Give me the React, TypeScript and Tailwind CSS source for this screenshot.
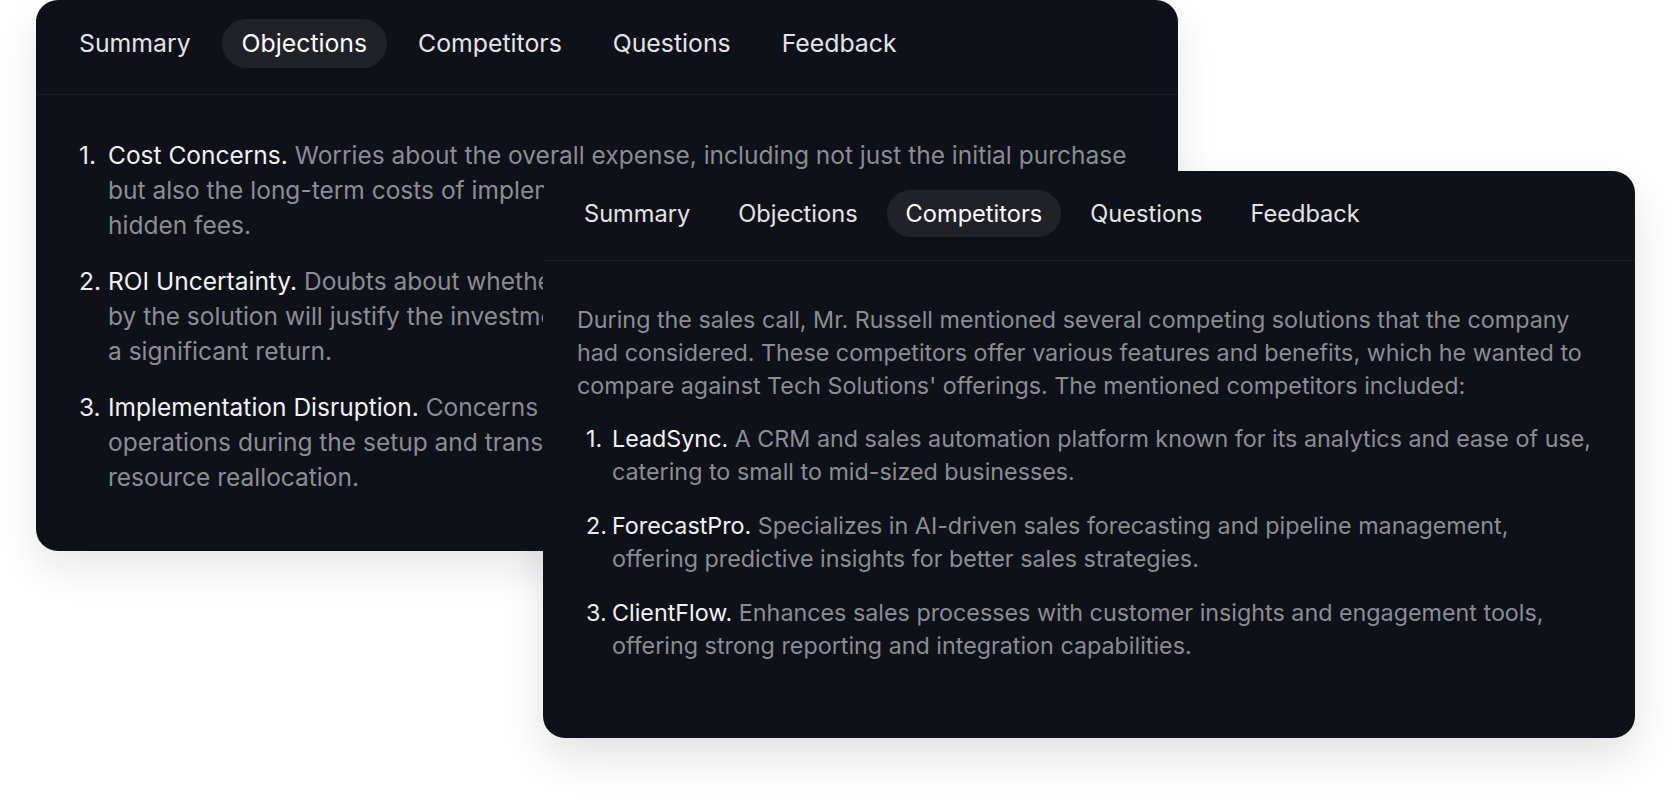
import React from "react";

const tabs = ["Summary", "Objections", "Competitors", "Questions", "Feedback"];

function Tabs({ active, big }: { active: string; big?: boolean }) {
  return (
    <div
      className={
        big
          ? "flex items-center gap-[11px] pl-[23px] pt-[19px] pb-[26px] border-b border-[#1a1d24]"
          : "flex items-center gap-[10px] pl-[22px] pt-[19px] pb-[23px] border-b border-[#1a1d24]"
      }
    >
      {tabs.map((t) => (
        <div
          key={t}
          className={
            (big
              ? "h-[49px] px-[20px] text-[24.8px] "
              : "h-[47px] px-[19px] text-[23.6px] ") +
            "flex items-center rounded-full whitespace-nowrap " +
            (t === active ? "bg-[#202228] text-white" : "text-[#e4e4e6]")
          }
        >
          {t}
        </div>
      ))}
    </div>
  );
}

const objections: { title: string; lines: string[] }[] = [
  {
    title: "Cost Concerns.",
    lines: [
      " Worries about the overall expense, including not just the initial purchase",
      "but also the long-term costs of implementation, maintenance, and any",
      "hidden fees.",
    ],
  },
  {
    title: "ROI Uncertainty.",
    lines: [
      " Doubts about whether the benefits and efficiencies provided",
      "by the solution will justify the investment and if it will deliver",
      "a significant return.",
    ],
  },
  {
    title: "Implementation Disruption.",
    lines: [
      " Concerns about potential disruptions to daily business",
      "operations during the setup and transition period, including",
      "resource reallocation.",
    ],
  },
];

const competitors = [
  {
    title: "LeadSync.",
    text: " A CRM and sales automation platform known for its analytics and ease of use, catering to small to mid-sized businesses.",
  },
  {
    title: "ForecastPro.",
    text: " Specializes in AI-driven sales forecasting and pipeline management, offering predictive insights for better sales strategies.",
  },
  {
    title: "ClientFlow.",
    text: " Enhances sales processes with customer insights and engagement tools, offering strong reporting and integration capabilities.",
  },
];

export default function App() {
  return (
    <div
      className="relative w-[1672px] h-[810px] bg-white overflow-hidden"
      style={{ fontFamily: "Inter, 'Noto Sans', sans-serif" }}
    >
      {/* Card 1 */}
      <div className="ml-[36px] w-[1142px] h-[551px] overflow-hidden rounded-[22px] bg-[#0e1118] shadow-[0_18px_40px_rgba(15,20,30,0.10)]">
        <Tabs active="Objections" big />
        <ol className="pl-[43px] pr-[40px] pt-[43px] flex flex-col gap-[21px] text-[24.5px] leading-[35px]">
          {objections.map((o, i) => (
            <li key={o.title} className="flex">
              <span className="w-[29px] shrink-0 text-[#ececee]">{i + 1}.</span>
              <span className="whitespace-nowrap">
                <span className="text-[#f2f2f4]">{o.title}</span>
                {o.lines.map((l, j) => (
                  <React.Fragment key={j}>
                    {j > 0 && <br />}
                    <span className="text-[#8b8d93]">{l}</span>
                  </React.Fragment>
                ))}
              </span>
            </li>
          ))}
        </ol>
      </div>

      {/* Card 2 (overlapping) */}
      <div className="absolute left-[543px] top-[171px] w-[1092px] h-[567px] rounded-[22px] bg-[#0e1118] shadow-[0_20px_44px_rgba(15,20,30,0.12)]">
        <Tabs active="Competitors" />
        <div className="pl-[34px] pr-[41px] pt-[42px] text-[23.3px] leading-[33px]">
          <p className="text-[#8b8d93]">
            During the sales call, Mr. Russell mentioned several competing solutions that the company had considered. These competitors offer various features and benefits, which he wanted to compare against Tech Solutions' offerings. The mentioned competitors included:
          </p>
          <ol className="mt-[20px] pl-[9px] flex flex-col gap-[21px]">
            {competitors.map((c, i) => (
              <li key={c.title} className="flex">
                <span className="w-[26px] shrink-0 text-[#ececee]">{i + 1}.</span>
                <span>
                  <span className="text-[#f2f2f4]">{c.title}</span>
                  <span className="text-[#8b8d93]">{c.text}</span>
                </span>
              </li>
            ))}
          </ol>
        </div>
      </div>
    </div>
  );
}
